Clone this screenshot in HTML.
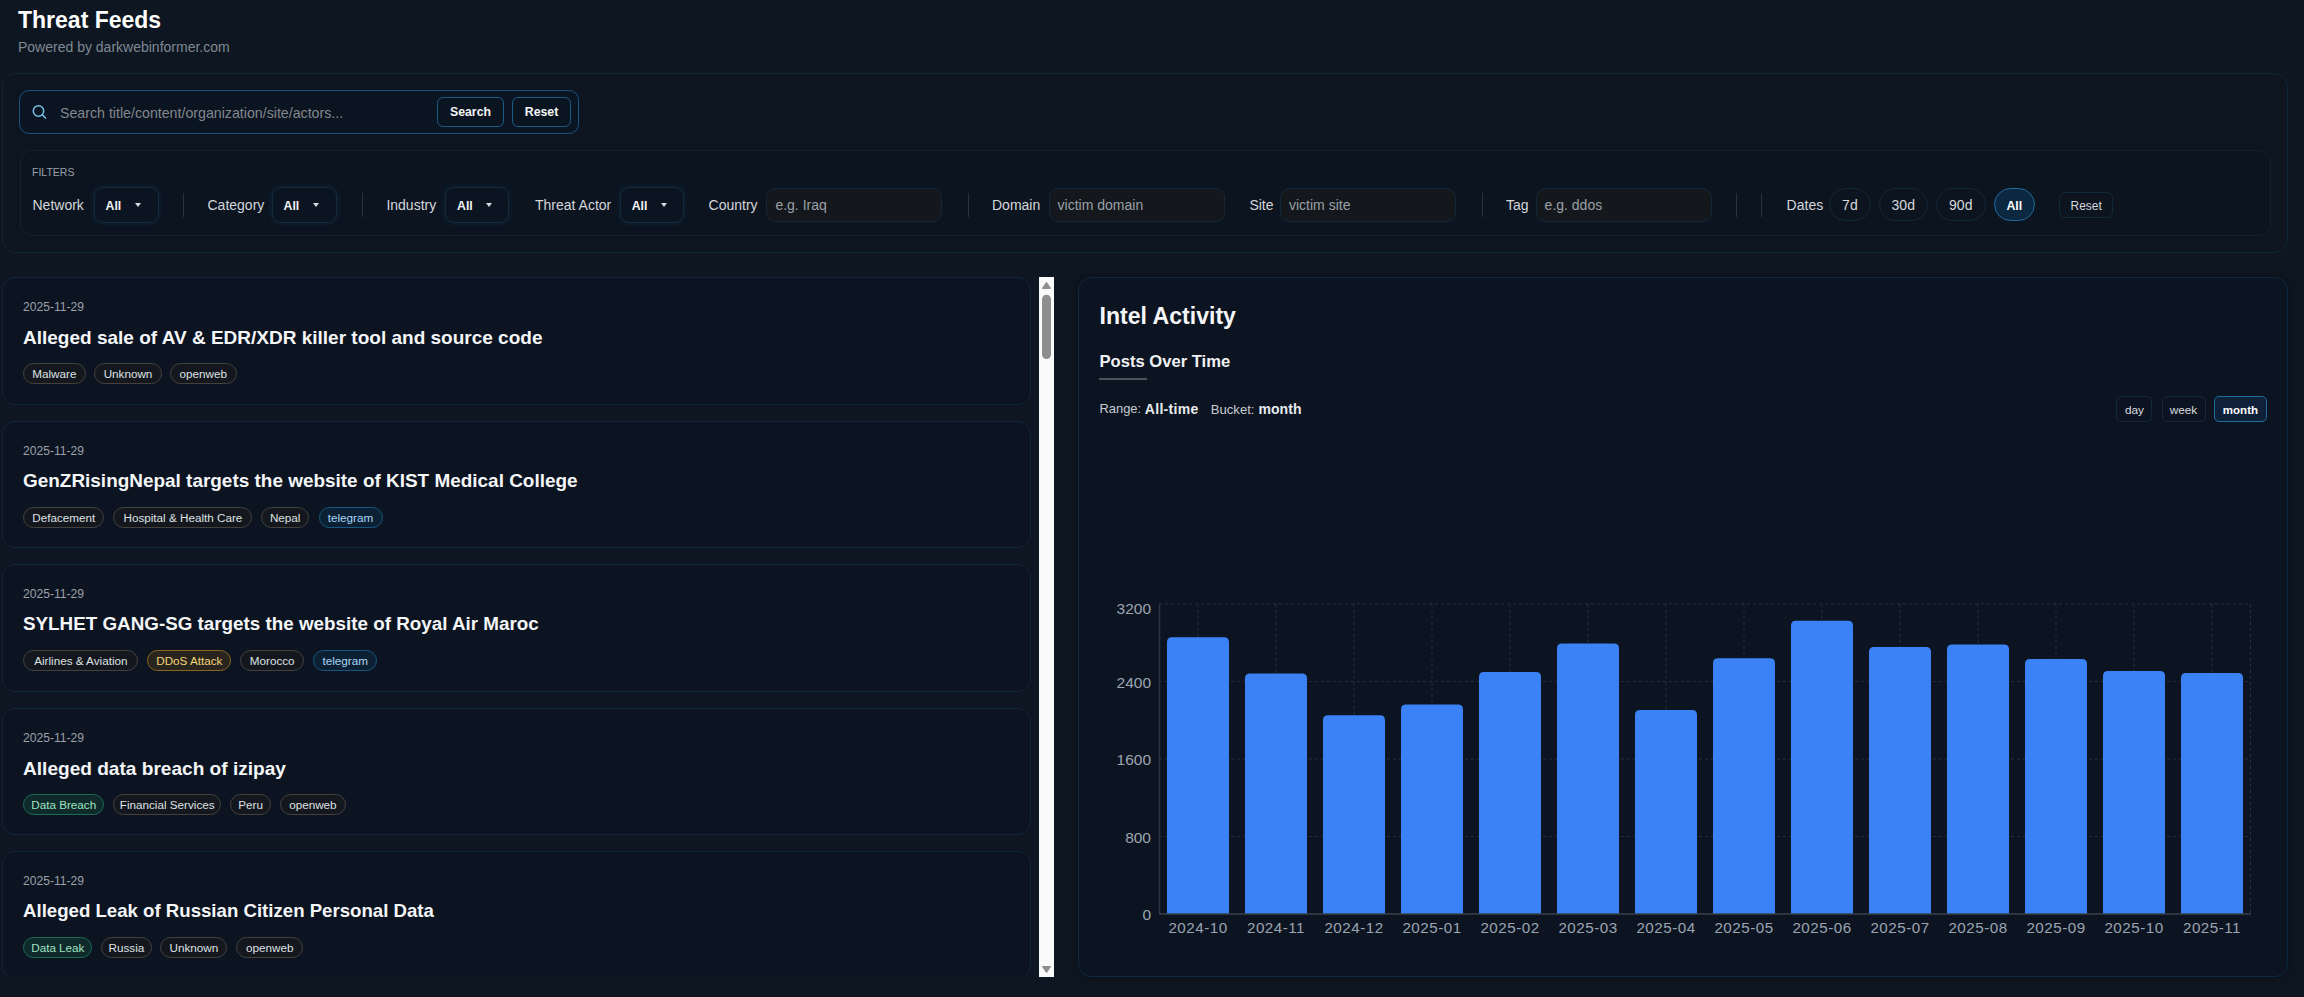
<!DOCTYPE html>
<html><head><meta charset="utf-8">
<style>
*{box-sizing:border-box;margin:0;padding:0}
html,body{width:2304px;height:997px;overflow:hidden;background:#0e1621;font-family:"Liberation Sans",sans-serif;color:#e6e8eb}
.a{position:absolute;white-space:nowrap}
.t{line-height:1}
.panel{position:absolute;border:1px solid #11273a;border-radius:16px;background:#0c1420}
.lbl{font-size:14px;color:#d4d7db}
.sel{position:absolute;top:187px;height:35.5px;border:1px solid #142a3d;border-radius:9px;background:#0b1421;box-shadow:0 0 6px rgba(20,90,140,.25)}
.sel b{position:absolute;left:11px;top:11.5px;font-size:12.3px;line-height:1;color:#f2f4f6}
.sel i{position:absolute;left:40px;top:15px;width:0;height:0;border-left:3.5px solid transparent;border-right:3.5px solid transparent;border-top:4px solid #d8dbe0}
.sep{position:absolute;top:193px;width:1px;height:24px;background:#2a333d}
.inp{position:absolute;top:188px;height:33.8px;width:176px;border:1px solid #142638;border-radius:9px;background:#14181d}
.inp span{position:absolute;left:8px;top:9px;font-size:14px;line-height:1;color:#9aa0a6}
.pill{position:absolute;top:188px;height:33px;border:1px solid #11293b;border-radius:17px;text-align:center;font-size:14px;line-height:33.5px;color:#d6d9dc}
.btn{position:absolute;border:1px solid #1a5b86;border-radius:6px;text-align:center;font-weight:bold;color:#f4f6f8}
.card{position:absolute;left:2px;width:1029px;border:1px solid #0f263a;border-radius:13px;background:#0c1422}
.date{left:20px;top:22.5px;font-size:12.1px;color:#9ba1a8}
.ttl{left:20px;top:49.7px;font-size:19px;font-weight:bold;color:#f4f6f8}
.tag{position:absolute;top:84.7px;height:21px;border:1px solid #45423e;border-radius:11px;background:#14181e;font-size:11.7px;line-height:19px;text-align:center;color:#dfe1e4;white-space:nowrap}
.tg{background:#0c2034;border-color:#17567f;color:#a9d6f5}
.dd{background:#29251e;border-color:#8a6720;color:#f0d47a}
.gr{background:#0f2a2a;border-color:#1d6b55;color:#9fe3c2}
.sb{position:absolute;border:1px solid #11293b;border-radius:5px;text-align:center;top:396px;height:25.5px;font-size:11.8px;line-height:27px;color:#d9dcdf}
</style></head><body>
<!-- header -->
<div class="a t" style="left:18px;top:8.5px;font-size:23px;font-weight:bold;color:#fff">Threat Feeds</div>
<div class="a t" style="left:18px;top:39.6px;font-size:14px;color:#7f8994">Powered by darkwebinformer.com</div>

<!-- filter outer panel -->
<div class="panel" style="left:2px;top:73px;width:2286px;height:180px;border-radius:14px;border-color:#0f2639;background:#0d1521"></div>
<!-- search box -->
<div class="a" style="left:19px;top:90px;width:560px;height:44px;border:1px solid #17547e;border-radius:10px;background:#0b1421"></div>
<svg class="a" style="left:30px;top:103px" width="18" height="18" viewBox="0 0 18 18"><circle cx="8.5" cy="8" r="5.2" fill="none" stroke="#79c0e6" stroke-width="1.5"/><line x1="12.3" y1="11.8" x2="15.5" y2="15" stroke="#79c0e6" stroke-width="1.5" stroke-linecap="round"/></svg>
<div class="a t" style="left:60px;top:105.6px;font-size:14.2px;color:#83878d">Search title/content/organization/site/actors...</div>
<div class="btn" style="left:437px;top:97px;width:67px;height:30px;font-size:12.3px;line-height:28px">Search</div>
<div class="btn" style="left:512px;top:97px;width:59px;height:30px;font-size:12.3px;line-height:28px">Reset</div>

<!-- filters inner panel -->
<div class="panel" style="left:19.5px;top:150px;width:2251px;height:86px;border-radius:12px;border-color:#0f2335;background:#0c1420"></div>
<div class="a t" style="left:32px;top:167px;font-size:10.5px;color:#9aa1a8">FILTERS</div>

<div class="a t lbl" style="left:32.5px;top:198px">Network</div>
<div class="sel" style="left:93.5px;width:65px"><b>All</b><i></i></div>
<div class="sep" style="left:183px"></div>
<div class="a t lbl" style="left:207.5px;top:198px">Category</div>
<div class="sel" style="left:271.5px;width:65px"><b>All</b><i></i></div>
<div class="sep" style="left:361.5px"></div>
<div class="a t lbl" style="left:386.4px;top:198px">Industry</div>
<div class="sel" style="left:445px;width:64px"><b>All</b><i></i></div>
<div class="a t lbl" style="left:535px;top:198px">Threat Actor</div>
<div class="sel" style="left:619.7px;width:64px"><b>All</b><i></i></div>
<div class="a t lbl" style="left:708.6px;top:198px">Country</div>
<div class="inp" style="left:766.4px"><span>e.g. Iraq</span></div>
<div class="sep" style="left:967.5px"></div>
<div class="a t lbl" style="left:992px;top:198px">Domain</div>
<div class="inp" style="left:1048.6px"><span>victim domain</span></div>
<div class="a t lbl" style="left:1249.4px;top:198px">Site</div>
<div class="inp" style="left:1280px"><span>victim site</span></div>
<div class="sep" style="left:1481.6px"></div>
<div class="a t lbl" style="left:1506px;top:198px">Tag</div>
<div class="inp" style="left:1535.6px"><span>e.g. ddos</span></div>
<div class="sep" style="left:1736px"></div>
<div class="sep" style="left:1761px"></div>
<div class="a t lbl" style="left:1786.6px;top:198px">Dates</div>
<div class="pill" style="left:1829.2px;width:41.4px">7d</div>
<div class="pill" style="left:1879px;width:48.5px">30d</div>
<div class="pill" style="left:1936px;width:49.5px">90d</div>
<div class="pill" style="left:1994px;width:40.7px;background:#0c2740;border-color:#1f6b9c;color:#fff;font-weight:bold;font-size:12.3px;line-height:35px">All</div>
<div class="a" style="left:2059px;top:192px;width:54.4px;height:25.5px;border:1px solid #11283a;border-radius:6px;text-align:center;font-size:12px;line-height:27px;color:#d6d9dc">Reset</div>

<div class="a" style="left:0;top:277px;width:1036px;height:700px;overflow:hidden">
<div class="card" style="top:0px;height:128px">
<div class="a t date">2025-11-29</div>
<div class="a t ttl" style="font-size:19.0px;top:49.72px">Alleged sale of AV &amp; EDR/XDR killer tool and source code</div>
<div class="tag " style="left:19.9px;width:62.9px">Malware</div>
<div class="tag " style="left:91.3px;width:67.4px">Unknown</div>
<div class="tag " style="left:167.0px;width:66.6px">openweb</div>
</div>
<div class="card" style="top:144px;height:127px">
<div class="a t date">2025-11-29</div>
<div class="a t ttl" style="font-size:18.95px;top:49.76px">GenZRisingNepal targets the website of KIST Medical College</div>
<div class="tag " style="left:20.3px;width:80.8px">Defacement</div>
<div class="tag " style="left:110.4px;width:139.1px">Hospital &amp; Health Care</div>
<div class="tag " style="left:258.2px;width:48.0px">Nepal</div>
<div class="tag tg" style="left:315.5px;width:64.0px">telegram</div>
</div>
<div class="card" style="top:287px;height:128px">
<div class="a t date">2025-11-29</div>
<div class="a t ttl" style="font-size:18.82px;top:49.87px">SYLHET GANG-SG targets the website of Royal Air Maroc</div>
<div class="tag " style="left:20.2px;width:115.3px">Airlines &amp; Aviation</div>
<div class="tag dd" style="left:144.3px;width:84.1px">DDoS Attack</div>
<div class="tag " style="left:237.2px;width:64.0px">Morocco</div>
<div class="tag tg" style="left:310.0px;width:64.4px">telegram</div>
</div>
<div class="card" style="top:431px;height:127px">
<div class="a t date">2025-11-29</div>
<div class="a t ttl" style="font-size:19.09px;top:49.64px">Alleged data breach of izipay</div>
<div class="tag gr" style="left:20.2px;width:81.1px">Data Breach</div>
<div class="tag " style="left:110.1px;width:108.2px">Financial Services</div>
<div class="tag " style="left:227.1px;width:41.2px">Peru</div>
<div class="tag " style="left:276.6px;width:66.6px">openweb</div>
</div>
<div class="card" style="top:574px;height:128px">
<div class="a t date">2025-11-29</div>
<div class="a t ttl" style="font-size:18.64px;top:50.02px">Alleged Leak of Russian Citizen Personal Data</div>
<div class="tag gr" style="left:20.2px;width:69.3px">Data Leak</div>
<div class="tag " style="left:98.2px;width:50.4px">Russia</div>
<div class="tag " style="left:157.4px;width:67.1px">Unknown</div>
<div class="tag " style="left:233.2px;width:67.1px">openweb</div>
</div>
</div>
<div class="a" style="left:1039px;top:277px;width:15px;height:700px;background:#fafafa"></div>
<svg class="a" style="left:1039px;top:277px" width="15" height="700" viewBox="0 0 15 700"><path d="M3.8 11.2L7.5 5.8L11.2 11.2Z" fill="#8e8e8e" stroke="#8e8e8e" stroke-width="1.4" stroke-linejoin="round"/><rect x="3" y="17.8" width="9" height="64.2" rx="4.5" fill="#8e8e8e"/><path d="M3.8 689.6L7.5 695L11.2 689.6Z" fill="#8e8e8e" stroke="#8e8e8e" stroke-width="1.4" stroke-linejoin="round"/></svg>

<div class="panel" style="left:1078px;top:277px;width:1210px;height:700px;border-radius:13px;border-color:#0d2940;background:#0c1422;box-shadow:0 0 10px rgba(0,0,0,.35)"></div>
<div class="a t" style="left:1099.5px;top:305px;font-size:23.1px;font-weight:bold;color:#f4f6f8">Intel Activity</div>
<div class="a t" style="left:1099.5px;top:354px;font-size:16.6px;font-weight:bold;color:#f0f2f4">Posts Over Time</div>
<div class="a" style="left:1099px;top:378px;width:48px;height:2px;background:#4d535b"></div>
<div class="a t" style="left:1099.5px;top:403px;font-size:12.9px;color:#c9cdd2">Range:</div>
<div class="a t" style="left:1144.8px;top:402.2px;font-size:14px;letter-spacing:.3px;font-weight:bold;color:#e8eaed">All-time</div>
<div class="a t" style="left:1210.8px;top:403px;font-size:13.1px;color:#c9cdd2">Bucket:</div>
<div class="a t" style="left:1258.5px;top:402.2px;font-size:14px;letter-spacing:.05px;font-weight:bold;color:#e8eaed">month</div>
<div class="sb" style="left:2116.3px;width:36.2px">day</div>
<div class="sb" style="left:2161.5px;width:44px">week</div>
<div class="sb" style="left:2214.2px;width:52.5px;background:#0e2138;border-color:#1f6c9e;color:#fff;font-weight:bold;font-size:11.5px">month</div>
<svg class="a" style="left:0;top:0" width="2304" height="997" viewBox="0 0 2304 997">
<line x1="1159" y1="603.8" x2="2251" y2="603.8" stroke="#27313d" stroke-width="1" stroke-dasharray="3 3"/>
<line x1="1159" y1="681.4" x2="2251" y2="681.4" stroke="#27313d" stroke-width="1" stroke-dasharray="3 3"/>
<line x1="1159" y1="759.0" x2="2251" y2="759.0" stroke="#27313d" stroke-width="1" stroke-dasharray="3 3"/>
<line x1="1159" y1="836.6" x2="2251" y2="836.6" stroke="#27313d" stroke-width="1" stroke-dasharray="3 3"/>
<line x1="1198.0" y1="603.8" x2="1198.0" y2="914.0" stroke="#27313d" stroke-width="1" stroke-dasharray="3 3"/>
<line x1="1276.0" y1="603.8" x2="1276.0" y2="914.0" stroke="#27313d" stroke-width="1" stroke-dasharray="3 3"/>
<line x1="1354.0" y1="603.8" x2="1354.0" y2="914.0" stroke="#27313d" stroke-width="1" stroke-dasharray="3 3"/>
<line x1="1432.0" y1="603.8" x2="1432.0" y2="914.0" stroke="#27313d" stroke-width="1" stroke-dasharray="3 3"/>
<line x1="1510.0" y1="603.8" x2="1510.0" y2="914.0" stroke="#27313d" stroke-width="1" stroke-dasharray="3 3"/>
<line x1="1588.0" y1="603.8" x2="1588.0" y2="914.0" stroke="#27313d" stroke-width="1" stroke-dasharray="3 3"/>
<line x1="1666.0" y1="603.8" x2="1666.0" y2="914.0" stroke="#27313d" stroke-width="1" stroke-dasharray="3 3"/>
<line x1="1744.0" y1="603.8" x2="1744.0" y2="914.0" stroke="#27313d" stroke-width="1" stroke-dasharray="3 3"/>
<line x1="1822.0" y1="603.8" x2="1822.0" y2="914.0" stroke="#27313d" stroke-width="1" stroke-dasharray="3 3"/>
<line x1="1900.0" y1="603.8" x2="1900.0" y2="914.0" stroke="#27313d" stroke-width="1" stroke-dasharray="3 3"/>
<line x1="1978.0" y1="603.8" x2="1978.0" y2="914.0" stroke="#27313d" stroke-width="1" stroke-dasharray="3 3"/>
<line x1="2056.0" y1="603.8" x2="2056.0" y2="914.0" stroke="#27313d" stroke-width="1" stroke-dasharray="3 3"/>
<line x1="2134.0" y1="603.8" x2="2134.0" y2="914.0" stroke="#27313d" stroke-width="1" stroke-dasharray="3 3"/>
<line x1="2212.0" y1="603.8" x2="2212.0" y2="914.0" stroke="#27313d" stroke-width="1" stroke-dasharray="3 3"/>
<line x1="2250.5" y1="603.8" x2="2250.5" y2="914.0" stroke="#27313d" stroke-width="1" stroke-dasharray="3 3"/>
<path d="M1167 914.0V642.2Q1167 637.2 1172 637.2H1224Q1229 637.2 1229 642.2V914.0Z" fill="#3b82f6"/>
<path d="M1245 914.0V678.4Q1245 673.4 1250 673.4H1302Q1307 673.4 1307 678.4V914.0Z" fill="#3b82f6"/>
<path d="M1323 914.0V720.2Q1323 715.2 1328 715.2H1380Q1385 715.2 1385 720.2V914.0Z" fill="#3b82f6"/>
<path d="M1401 914.0V709.5Q1401 704.5 1406 704.5H1458Q1463 704.5 1463 709.5V914.0Z" fill="#3b82f6"/>
<path d="M1479 914.0V677Q1479 672 1484 672H1536Q1541 672 1541 677V914.0Z" fill="#3b82f6"/>
<path d="M1557 914.0V648.5Q1557 643.5 1562 643.5H1614Q1619 643.5 1619 648.5V914.0Z" fill="#3b82f6"/>
<path d="M1635 914.0V714.9Q1635 709.9 1640 709.9H1692Q1697 709.9 1697 714.9V914.0Z" fill="#3b82f6"/>
<path d="M1713 914.0V663.3Q1713 658.3 1718 658.3H1770Q1775 658.3 1775 663.3V914.0Z" fill="#3b82f6"/>
<path d="M1791 914.0V625.7Q1791 620.7 1796 620.7H1848Q1853 620.7 1853 625.7V914.0Z" fill="#3b82f6"/>
<path d="M1869 914.0V651.9Q1869 646.9 1874 646.9H1926Q1931 646.9 1931 651.9V914.0Z" fill="#3b82f6"/>
<path d="M1947 914.0V649.5Q1947 644.5 1952 644.5H2004Q2009 644.5 2009 649.5V914.0Z" fill="#3b82f6"/>
<path d="M2025 914.0V664Q2025 659 2030 659H2082Q2087 659 2087 664V914.0Z" fill="#3b82f6"/>
<path d="M2103 914.0V676Q2103 671 2108 671H2160Q2165 671 2165 676V914.0Z" fill="#3b82f6"/>
<path d="M2181 914.0V677.9Q2181 672.9 2186 672.9H2238Q2243 672.9 2243 677.9V914.0Z" fill="#3b82f6"/>
<line x1="1159.5" y1="603.8" x2="1159.5" y2="914.0" stroke="#2b3542" stroke-width="1.5"/>
<line x1="1159" y1="914.0" x2="2251" y2="914.0" stroke="#38414d" stroke-width="1.5"/>
<text x="1151" y="614.1" text-anchor="end" font-size="15.5" fill="#9ba4b0" font-family="Liberation Sans">3200</text>
<text x="1151" y="687.5" text-anchor="end" font-size="15.5" fill="#9ba4b0" font-family="Liberation Sans">2400</text>
<text x="1151" y="765.3" text-anchor="end" font-size="15.5" fill="#9ba4b0" font-family="Liberation Sans">1600</text>
<text x="1151" y="842.6" text-anchor="end" font-size="15.5" fill="#9ba4b0" font-family="Liberation Sans">800</text>
<text x="1151" y="919.7" text-anchor="end" font-size="15.5" fill="#9ba4b0" font-family="Liberation Sans">0</text>
<text x="1198.0" y="932.8" text-anchor="middle" font-size="15.2" letter-spacing="0.5" fill="#9ba4b0" font-family="Liberation Sans">2024-10</text>
<text x="1276.0" y="932.8" text-anchor="middle" font-size="15.2" letter-spacing="0.5" fill="#9ba4b0" font-family="Liberation Sans">2024-11</text>
<text x="1354.0" y="932.8" text-anchor="middle" font-size="15.2" letter-spacing="0.5" fill="#9ba4b0" font-family="Liberation Sans">2024-12</text>
<text x="1432.0" y="932.8" text-anchor="middle" font-size="15.2" letter-spacing="0.5" fill="#9ba4b0" font-family="Liberation Sans">2025-01</text>
<text x="1510.0" y="932.8" text-anchor="middle" font-size="15.2" letter-spacing="0.5" fill="#9ba4b0" font-family="Liberation Sans">2025-02</text>
<text x="1588.0" y="932.8" text-anchor="middle" font-size="15.2" letter-spacing="0.5" fill="#9ba4b0" font-family="Liberation Sans">2025-03</text>
<text x="1666.0" y="932.8" text-anchor="middle" font-size="15.2" letter-spacing="0.5" fill="#9ba4b0" font-family="Liberation Sans">2025-04</text>
<text x="1744.0" y="932.8" text-anchor="middle" font-size="15.2" letter-spacing="0.5" fill="#9ba4b0" font-family="Liberation Sans">2025-05</text>
<text x="1822.0" y="932.8" text-anchor="middle" font-size="15.2" letter-spacing="0.5" fill="#9ba4b0" font-family="Liberation Sans">2025-06</text>
<text x="1900.0" y="932.8" text-anchor="middle" font-size="15.2" letter-spacing="0.5" fill="#9ba4b0" font-family="Liberation Sans">2025-07</text>
<text x="1978.0" y="932.8" text-anchor="middle" font-size="15.2" letter-spacing="0.5" fill="#9ba4b0" font-family="Liberation Sans">2025-08</text>
<text x="2056.0" y="932.8" text-anchor="middle" font-size="15.2" letter-spacing="0.5" fill="#9ba4b0" font-family="Liberation Sans">2025-09</text>
<text x="2134.0" y="932.8" text-anchor="middle" font-size="15.2" letter-spacing="0.5" fill="#9ba4b0" font-family="Liberation Sans">2025-10</text>
<text x="2212.0" y="932.8" text-anchor="middle" font-size="15.2" letter-spacing="0.5" fill="#9ba4b0" font-family="Liberation Sans">2025-11</text>
</svg>
</body></html>
